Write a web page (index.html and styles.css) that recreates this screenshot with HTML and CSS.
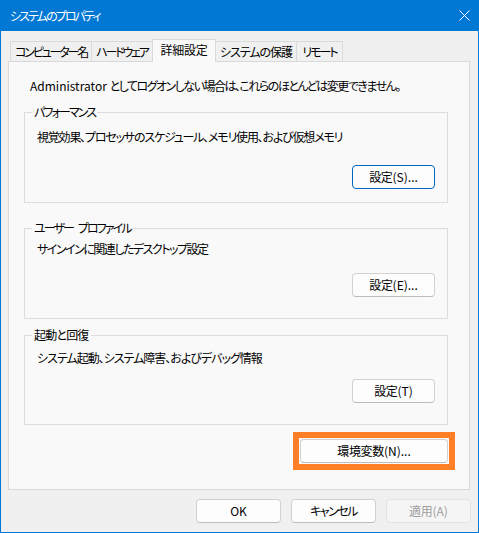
FILE: index.html
```html
<!DOCTYPE html>
<html lang="ja">
<head>
<meta charset="utf-8">
<title>システムのプロパティ</title>
<link rel="stylesheet" href="styles.css">
</head>
<body>
<div class="window">
  <header class="titlebar">
    <span class="title">システムのプロパティ</span>
    <span class="close" aria-label="閉じる">
      <svg width="11" height="11" viewBox="0 0 11 11"><path d="M0.5 0.5L10.5 10.5M10.5 0.5L0.5 10.5" stroke="#ffffff" stroke-width="1" fill="none"/></svg>
    </span>
  </header>
  <main class="content">
    <nav class="tabs">
      <div class="tab tab--computer">コンピューター名</div>
      <div class="tab tab--hardware">ハードウェア</div>
      <div class="tab tab--advanced tab--active">詳細設定</div>
      <div class="tab tab--protection">システムの保護</div>
      <div class="tab tab--remote">リモート</div>
    </nav>
    <section class="panel">
      <p class="notice"><span class="latin">Administrator </span>としてログオンしない場合は、これらのほとんどは変更できません。</p>
      <div class="group group--perf">
        <span class="group-title">パフォーマンス</span>
        <p class="desc">視覚効果、プロセッサのスケジュール、メモリ使用、および仮想メモリ</p>
        <div class="btn-row"><button class="btn btn--default">設定<span class="latin">(S)...</span></button></div>
      </div>
      <div class="group group--profile">
        <span class="group-title">ユーザー プロファイル</span>
        <p class="desc">サインインに関連したデスクトップ設定</p>
        <div class="btn-row"><button class="btn">設定<span class="latin">(E)...</span></button></div>
      </div>
      <div class="group group--startup">
        <span class="group-title">起動と回復</span>
        <p class="desc">システム起動、システム障害、およびデバッグ情報</p>
        <div class="btn-row"><button class="btn">設定<span class="latin">(T)</span></button></div>
      </div>
      <div class="env-row">
        <span class="highlight"><button class="btn btn--env">環境変数<span class="latin">(N)...</span></button></span>
      </div>
    </section>
    <footer class="actions">
      <button class="btn btn--action"><span class="latin">OK</span></button>
      <button class="btn btn--action">キャンセル</button>
      <button class="btn btn--action" disabled>適用<span class="latin">(A)</span></button>
    </footer>
  </main>
</div>
</body>
</html>
```
FILE: styles.css
```css
html, body {
  margin: 0;
  padding: 0;
  background: #ffffff;
}

.window {
  width: 479px;
  height: 533px;
  box-sizing: border-box;
  border: 1px solid #0078d4;
  border-top: 0;
  background: #f0f0f0;
  font-family: "Noto Sans CJK JP", sans-serif;
  font-feature-settings: "palt";
  font-size: 12px;
  letter-spacing: -1.3px;
  color: #000000;
  display: flex;
  flex-direction: column;
}

.latin {
  letter-spacing: 0;
}

.titlebar {
  height: 31px;
  flex: none;
  background: #0078d4;
  color: #ffffff;
  display: flex;
  align-items: center;
  justify-content: space-between;
  padding: 0 8px 0 9px;
}

.title {
  line-height: 16px;
  letter-spacing: -1.9px;
}

.close {
  display: flex;
  width: 11px;
  height: 11px;
  margin-top: -1px;
}

.content {
  flex: 1;
  display: flex;
  flex-direction: column;
  padding: 8px 8px 0 7px;
}

.tabs {
  display: flex;
  align-items: flex-end;
  height: 22px;
  padding-left: 2px;
}

.tab {
  box-sizing: border-box;
  height: 20px;
  line-height: 19px;
  padding: 0;
  text-align: center;
  border: 1px solid #d9d9d9;
  border-bottom: 0;
  margin-left: -1px;
  white-space: nowrap;
  letter-spacing: -2.2px;
}

.tab:first-child {
  margin-left: 0;
}

.tab--computer { width: 82px; }
.tab--hardware { width: 62px; }
.tab--advanced { width: 64px; }
.tab--protection { width: 82px; letter-spacing: -1px; }
.tab--remote { width: 47px; letter-spacing: -2px; }

.tab--active {
  height: 23px;
  line-height: 20px;
  margin-bottom: -1px;
  background: #f9f9f9;
  position: relative;
  z-index: 1;
  letter-spacing: -0.3px;
}

.panel {
  box-sizing: border-box;
  height: 429px;
  border: 1px solid #d9d9d9;
  background: #f9f9f9;
  display: flex;
  flex-direction: column;
}

.notice {
  margin: 16px 0 0 21px;
  line-height: 16px;
  white-space: nowrap;
  letter-spacing: -1.5px;
}

.group {
  box-sizing: border-box;
  width: 424px;
  margin-left: 15px;
  border: 1px solid #dcdcdc;
  display: flex;
  flex-direction: column;
}

.group-title {
  align-self: flex-start;
  margin: -9px 0 0 7px;
  padding: 0 2px;
  line-height: 16px;
  background: #f9f9f9;
  letter-spacing: -1.9px;
  word-spacing: 4px;
}

.group--startup .group-title {
  letter-spacing: -0.8px;
}

.desc {
  margin: 0 0 0 12px;
  line-height: 16px;
  white-space: nowrap;
}

.group--perf .desc { letter-spacing: -1.2px; }
.group--profile .desc { letter-spacing: -1.5px; }
.group--startup .desc { letter-spacing: -1px; }

.btn-row {
  display: flex;
  justify-content: flex-end;
  padding-right: 12px;
}

.group--perf { margin-top: 18px; height: 91px; }
.group--perf .desc { margin-top: 9px; }
.group--perf .btn-row { margin-top: 20px; }

.group--profile { margin-top: 25px; height: 91px; }
.group--profile .desc { margin-top: 5px; }
.group--profile .btn-row { margin-top: 16px; }

.group--startup { margin-top: 16px; height: 90px; }
.group--startup .desc { margin-top: 7px; }
.group--startup .btn-row { margin-top: 13px; }

.btn {
  box-sizing: border-box;
  width: 83px;
  height: 24px;
  padding: 0;
  font: inherit;
  font-feature-settings: "palt";
  letter-spacing: -0.3px;
  color: #000000;
  background: #fdfdfd;
  border: 1px solid #d1d1d1;
  border-bottom-color: #bdbdbd;
  border-radius: 4px;
  line-height: 20px;
}

.btn--default {
  border-color: #0067c0;
}

.env-row {
  display: flex;
  justify-content: flex-end;
  width: 424px;
  margin: 14px 0 0 15px;
}

.highlight {
  display: flex;
  margin: -7px;
  padding: 1px;
  border: 6px solid #ff7f27;
}

.btn--env {
  width: 148px;
}

.actions {
  display: flex;
  justify-content: flex-end;
  gap: 10px;
  margin: 9px -1px 0 0;
}

.btn--action {
  width: 85px;
}

.btn--action:nth-child(2) {
  letter-spacing: -1.5px;
}

.btn--action:disabled {
  color: #a0a0a0;
  background: #f5f5f5;
  border-color: #e3e3e3;
}
```
